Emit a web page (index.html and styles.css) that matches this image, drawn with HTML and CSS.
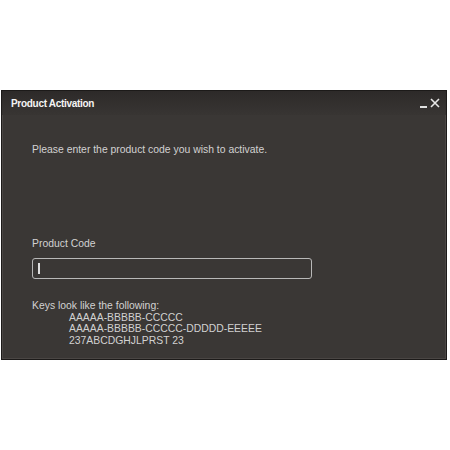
FILE: index.html
```html
<!DOCTYPE html>
<html lang="en">
<head>
    <meta charset="UTF-8">
    <title>Product Activation</title>
    <link rel="stylesheet" href="styles.css">
</head>
<body>
    <div class="dialog">
        <div class="titlebar">
            <span class="title">Product Activation</span>
            <div class="controls">
                <span class="minimize"></span>
                <svg class="close" width="10" height="10" viewBox="0 0 10 10">
                    <path d="M1 1 L9 9 M9 1 L1 9" stroke="#e8e8e8" stroke-width="1.6"/>
                </svg>
            </div>
        </div>

        <div class="content">
            <p class="intro">Please enter the product code you wish to activate.</p>

            <label class="label">Product Code</label>
            <div class="input"><span class="caret"></span></div>

            <div class="hint">
                <div>Keys look like the following:</div>
                <div class="sample">AAAAA-BBBBB-CCCCC</div>
                <div class="sample">AAAAA-BBBBB-CCCCC-DDDDD-EEEEE</div>
                <div class="sample">237ABCDGHJLPRST 23</div>
            </div>
        </div>
    </div>
</body>
</html>
```

FILE: styles.css
```css
body {
    margin: 0;
    background: #fff;
    font-family: "Liberation Sans", Arial, sans-serif;
}

.dialog {
    margin: 90px 0 0 1px;
    width: 444px;
    height: 268px;
    background: #3a3735;
    border: 1px solid #1c1a19;
    display: flex;
    flex-direction: column;
    box-shadow: inset 0 0 0 1px #4a4644;
}

.titlebar {
    height: 24px;
    display: flex;
    align-items: center;
    justify-content: space-between;
    padding: 0 6px 0 9px;
    background: linear-gradient(to bottom, #2d2a29, #383533);
}
.title {
    color: #f4f4f4;
    font-size: 10px;
    font-weight: bold;
    letter-spacing: -0.3px;
}
.controls {
    display: flex;
    align-items: center;
    gap: 3px;
}
.minimize {
    display: block;
    width: 7px;
    height: 2px;
    background: #e0e0e0;
    margin-top: 8px;
}

.content {
    padding: 29px 0 0 30px;
    color: #d2d2d2;
    font-size: 10.4px;
}
.intro {
    margin: 0;
}
.label {
    display: block;
    margin-top: 83px;
}
.input {
    margin-top: 9px;
    width: 273px;
    height: 19px;
    border: 1.5px solid #b8b8b8;
    border-radius: 3px;
    display: flex;
    align-items: center;
    padding-left: 5px;
}
.caret {
    width: 1.5px;
    height: 11px;
    background: #e0e0e0;
}
.hint {
    margin-top: 21px;
    line-height: 11.6px;
}
.sample {
    padding-left: 37px;
}
```
